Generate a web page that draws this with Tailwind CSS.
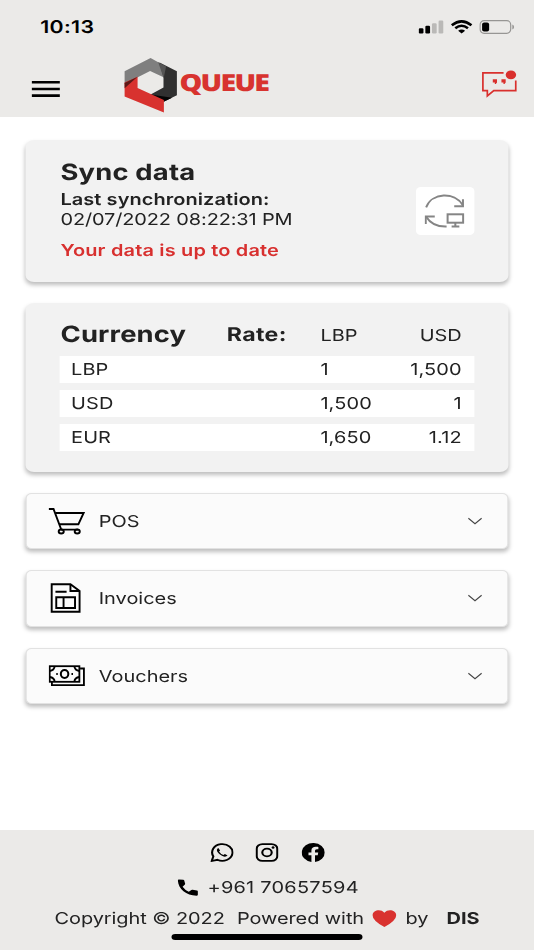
<!DOCTYPE html>
<html lang="en">
<head>
<meta charset="utf-8">
<title>Queue</title>
<script src="https://cdn.jsdelivr.net/npm/@tailwindcss/browser@4"></script>
</head>
<body class="w-[534px] h-[950px] overflow-hidden bg-white">
<div class="w-[439px] h-[950px] origin-top-left scale-x-[1.2164] flex flex-col font-['Inter','Liberation_Sans',sans-serif] [text-rendering:geometricPrecision] text-[#222] text-[16.4px] leading-5 tracking-[0px] whitespace-nowrap">

  <header class="h-[117px] shrink-0 bg-[#ebeae8]">
    <div class="h-[54px] pl-[33px] pr-[16.5px] flex items-center">
      <span class="pt-[1px] text-[17.5px] font-semibold text-black tracking-[0.3px]">10:13</span>
      <div class="ml-auto flex items-center gap-[5px]">
        <svg class="w-[21px] h-[14px]" viewBox="0 0 25.5 14" preserveAspectRatio="none"><rect x="0.3" y="8.3" width="4.7" height="5.2" rx="1.2"/><rect x="6.9" y="5.8" width="4.7" height="7.7" rx="1.2"/><g fill="#bab9b7"><rect x="13.5" y="3.3" width="4.7" height="10.2" rx="1.2"/><rect x="20.1" y="0.5" width="4.7" height="13" rx="1.2"/></g></svg>
        <svg class="w-[19px] h-[14px]" viewBox="0 0 23 14" preserveAspectRatio="none" fill="none" stroke="#000" stroke-width="2.6"><path d="M1.7 5.3Q11.5-2.6 21.3 5.3"/><path d="M5.2 8.3Q11.5 3.2 17.8 8.3"/><path d="M8 10.8Q11.5 8 15 10.8L11.5 13.6Z" fill="#000" stroke="none"/></svg>
        <svg class="w-[29px] h-[14px]" viewBox="0 0 35 14" preserveAspectRatio="none"><rect x="0.8" y="0.7" width="30.4" height="12.6" rx="4" fill="none" stroke="#979694" stroke-width="1.2"/><rect x="2.8" y="2.5" width="7" height="9" rx="2"/><path d="M32.8 4.6Q34.6 5.2 34.6 7T32.8 9.4Z" fill="#979694"/></svg>
      </div>
    </div>
    <div class="h-[63px] pl-[26px] pr-[14px] flex">
      <svg class="w-[24px] h-[17px] mt-[27px]" viewBox="0 0 29 17" preserveAspectRatio="none"><path d="M0 0H28V2.6H0ZM0 6.7H28V9.3H0ZM0 13.3H28V15.9H0Z"/></svg>
      <svg class="w-[44px] h-[56px] ml-[52px] mt-[3px]" viewBox="0 0 53.5 56" preserveAspectRatio="none"><path d="M0.5 27V14.3L26.5 1L35.5 6L40 20.5L26 14L13.2 20.5Z" fill="#7f7f7f"/><path d="M35.5 5.5L52.8 14.3V38.2L40 44.5L26.5 37.5L39.4 30.5V20.5Z" fill="#303030"/><path d="M34 5L42 9.5L39.6 21Z" fill="#555"/><path d="M26.5 37.5L48 40.7L39.7 44.8Z" fill="#050505"/><path d="M0.5 25.5L13.5 19.8V31L39.8 43V55.6L0.5 39.5Z" fill="#d8322f"/><path d="M0.5 26L13.5 19.8L0.5 31.3Z" fill="#5c1917"/></svg>
      <span class="ml-[1.5px] mt-[12px] font-['Open_Sans',sans-serif] font-extrabold text-[23.5px] leading-8 tracking-[-1.4px] text-[#d8332f]">QUEUE</span>
      <svg class="w-[29px] h-[28px] ml-auto mt-[16px]" viewBox="0 0 35 28" preserveAspectRatio="none" fill="none" stroke="#d9302d" stroke-width="1.7"><path d="M21.7 2.8H1.2V20.6H5.6V26L12 20.6H33.8V10.4"/><g fill="#d9302d" stroke="none"><path d="M11 9.3H15.2V12.5L14 14.1H13V12.6H11ZM19.6 9.3H23.8V12.5L22.6 14.1H21.6V12.6H19.6Z"/><ellipse cx="29" cy="4.8" rx="5.2" ry="4.4"/></g></svg>
    </div>
  </header>

  <main class="flex-1 px-[21.4px] pt-[23px]">
    <section class="h-[141.5px] rounded-[7px] bg-[#f2f2f2] shadow-[0_3px_4px_rgba(0,0,0,0.26)] pl-[28.3px] pr-[27.7px] flex justify-between">
      <div class="pt-[19px]">
        <h1 class="text-[22.5px] leading-[28px] font-bold tracking-[0.15px]">Sync data</h1>
        <p class="mt-[2px] font-semibold tracking-[0.07px]">Last synchronization:</p>
        <p class="tracking-[-0.1px]">02/07/2022 08:22:31 PM</p>
        <p class="mt-[11px] font-semibold tracking-[0.15px] text-[#d8302f]">Your data is up to date</p>
      </div>
      <div class="w-[48px] h-[48px] mt-[47px] rounded-[4px] bg-white flex items-center justify-center">
        <svg class="w-[33px] h-[34px]" viewBox="0 0 40 34" preserveAspectRatio="none" fill="none" stroke="#858585" stroke-width="2"><path d="M1.6 13.3C7.5-1.8 30-2 38 11"/><path d="M38.3 5.3V12.2H29.6"/><path d="M1.2 30V22.5H10.2"/><path d="M1.8 23Q8 33 22 32.5"/><rect x="23" y="20.3" width="15.5" height="8.4"/><path d="M30.7 29V32.5M27 32.6H34.7"/></svg>
      </div>
    </section>

    <section class="mt-[21.5px] h-[169px] rounded-[7px] bg-[#f2f2f2] shadow-[0_3px_4px_rgba(0,0,0,0.26)] px-[28px] pt-[18px]">
      <div class="h-[28px] mb-[7px] pr-[10px] flex items-center">
        <h2 class="w-[137px] pl-[0.4px] text-[22.5px] font-bold tracking-[0.1px]">Currency</h2>
        <span class="w-[77px] text-[19px] font-bold tracking-[0.3px]">Rate:</span>
        <span>LBP</span>
        <span class="ml-auto">USD</span>
      </div>
      <div class="flex flex-col gap-[7px] tracking-[0.1px]">
        <div class="h-[27px] bg-white pl-[9px] pr-[10px] pb-[1px] flex items-center"><span class="w-[205px]">LBP</span><span>1</span><span class="ml-auto">1,500</span></div>
        <div class="h-[27px] bg-white pl-[9px] pr-[10px] pb-[1px] flex items-center"><span class="w-[205px]">USD</span><span>1,500</span><span class="ml-auto">1</span></div>
        <div class="h-[27px] bg-white pl-[9px] pr-[10px] pb-[1px] flex items-center"><span class="w-[205px]">EUR</span><span>1,650</span><span class="ml-auto">1.12</span></div>
      </div>
    </section>

    <nav class="mt-[21px] flex flex-col gap-[21px]">
      <div class="h-[56.3px] rounded-[5px] border border-[#e2e2e2] bg-[#fbfbfb] shadow-[0_3px_4px_rgba(0,0,0,0.26)] pl-[17.8px] pr-[20px] flex items-center">
        <svg class="w-[30px] h-[28px]" viewBox="0 0 36 28" preserveAspectRatio="none" fill="none" stroke="#000" stroke-width="1.9"><path d="M0 2H4.8L12.2 22"/><path d="M6.7 6H34.5L29.3 17.3H10.6"/><path d="M12 22.6H29"/><ellipse cx="12.4" cy="24.5" rx="2.5" ry="2"/><ellipse cx="28.2" cy="24.5" rx="2.5" ry="2"/></svg>
        <span class="ml-[11px]">POS</span>
        <svg class="w-[13px] h-[8px] ml-auto" viewBox="0 0 16 8" preserveAspectRatio="none" fill="none" stroke="#444" stroke-width="1.1"><path d="M1.3 1.3L8 6.7L14.7 1.3"/></svg>
      </div>
      <div class="h-[56.3px] rounded-[5px] border border-[#e2e2e2] bg-[#fbfbfb] shadow-[0_3px_4px_rgba(0,0,0,0.26)] pl-[17.8px] pr-[20px] flex items-center">
        <svg class="w-[30px] h-[30px]" viewBox="0 0 36 30" preserveAspectRatio="none" fill="none" stroke="#000" stroke-width="1.9"><path d="M3 1.2H21.5L30.5 8V28.8H3Z"/><path d="M21.5 1.2V8H30.5"/><path d="M6.7 8.7H17.7M7.5 14.3H26V25H7.5ZM14.7 14.3V25"/></svg>
        <span class="ml-[11px]">Invoices</span>
        <svg class="w-[13px] h-[8px] ml-auto" viewBox="0 0 16 8" preserveAspectRatio="none" fill="none" stroke="#444" stroke-width="1.1"><path d="M1.3 1.3L8 6.7L14.7 1.3"/></svg>
      </div>
      <div class="h-[56.3px] rounded-[5px] border border-[#e2e2e2] bg-[#fbfbfb] shadow-[0_3px_4px_rgba(0,0,0,0.26)] pl-[17.8px] pr-[20px] flex items-center">
        <svg class="w-[30px] h-[22px]" viewBox="0 0 36 22" preserveAspectRatio="none" fill="none" stroke="#000" stroke-width="1.8"><rect x="1" y="1.2" width="29.3" height="15.6"/><path d="M31 3.5H34.8V20.2H3.2V17"/><path d="M1 6Q5.5 5.5 6 1.2M25.3 1.2Q25.8 5.5 30.3 6M1 12Q5.5 12.5 6 16.8M25.3 16.8Q25.8 12.5 30.3 12"/><ellipse cx="15.7" cy="9" rx="3.7" ry="3.9" stroke-width="2"/><path d="M7.5 9H9M22.5 9H24"/></svg>
        <span class="ml-[11px]">Vouchers</span>
        <svg class="w-[13px] h-[8px] ml-auto" viewBox="0 0 16 8" preserveAspectRatio="none" fill="none" stroke="#444" stroke-width="1.1"><path d="M1.3 1.3L8 6.7L14.7 1.3"/></svg>
      </div>
    </nav>
  </main>

  <footer class="h-[120px] shrink-0 bg-[#ebeae8] pt-[13px] flex flex-col items-center">
    <div class="flex gap-[18.5px]">
      <svg class="w-[19px] h-[19px]" viewBox="0 0 24 24" fill="none" stroke="#000" stroke-width="2.2"><path d="M1.3 22.7L3 16.9A10.6 10.6 0 1 1 7.2 21.2Z"/><path d="M8.2 6.3C5.8 8 6.3 10.8 9.6 14.2C13 17.6 16 18.2 17.8 15.8L15 13.8L13.5 15.2Q10.5 14 8.9 10.8L10 9.4Z" fill="#000" stroke="none"/></svg>
      <svg class="w-[19px] h-[19px]" viewBox="0 0 24 24" fill="none" stroke="#000" stroke-width="2.2"><rect x="1.3" y="1.3" width="21.4" height="21.4" rx="6"/><circle cx="12" cy="12" r="4.9"/><circle cx="18.3" cy="5.7" r="1.5" fill="#000" stroke="none"/></svg>
      <svg class="w-[19px] h-[19px]" viewBox="0 0 24 24"><path d="M24 12.07A12 12 0 1 0 10.13 23.93V15.54H7.08V12.07H10.13V9.43C10.13 6.42 11.92 4.76 14.66 4.76C15.97 4.76 17.34 5 17.34 5V7.95H15.83C14.34 7.95 13.87 8.88 13.87 9.83V12.07H17.2L16.67 15.54H13.87V23.93A12 12 0 0 0 24 12.07Z"/></svg>
    </div>
    <div class="mt-[15px] pl-[1.5px] flex items-center gap-[8px] tracking-[0.2px]">
      <svg class="w-[17px] h-[17px]" viewBox="0 0 24 24"><path d="M6.6 1L1.4.7Q.2.8.3 2C.8 14 10 23 22 23.6Q23.4 23.6 23.5 22.3V17.7Q23.5 16.8 22.5 16.4L17.4 15.2Q16.6 15 16 15.6L13 18.1Q8.4 15.5 5.8 11L8.5 7.8Q9 7.2 8.7 6.3L7.6 1.8Q7.4 1.1 6.6 1Z"/></svg>
      <span>+961 70657594</span>
    </div>
    <div class="mt-[11px] flex items-center tracking-[-0.05px]">
      <span>Copyright © 2022</span>
      <span class="ml-[10px]">Powered with</span>
      <svg class="w-[20px] h-[17px] ml-[7px]" viewBox="0 0 24 18" preserveAspectRatio="none" fill="#d9322f"><path d="M12 18Q0 11 .3 5.2C.6 0 8.5-1.8 12 2.8C15.5-1.8 23.4 0 23.7 5.2Q24 11 12 18Z"/></svg>
      <span class="ml-[7px]">by</span>
      <span class="ml-[15px] font-bold">DIS</span>
    </div>
    <div class="w-[157px] h-[5.5px] mt-[6px] rounded-full bg-black"></div>
  </footer>
</div>
</body>
</html>
